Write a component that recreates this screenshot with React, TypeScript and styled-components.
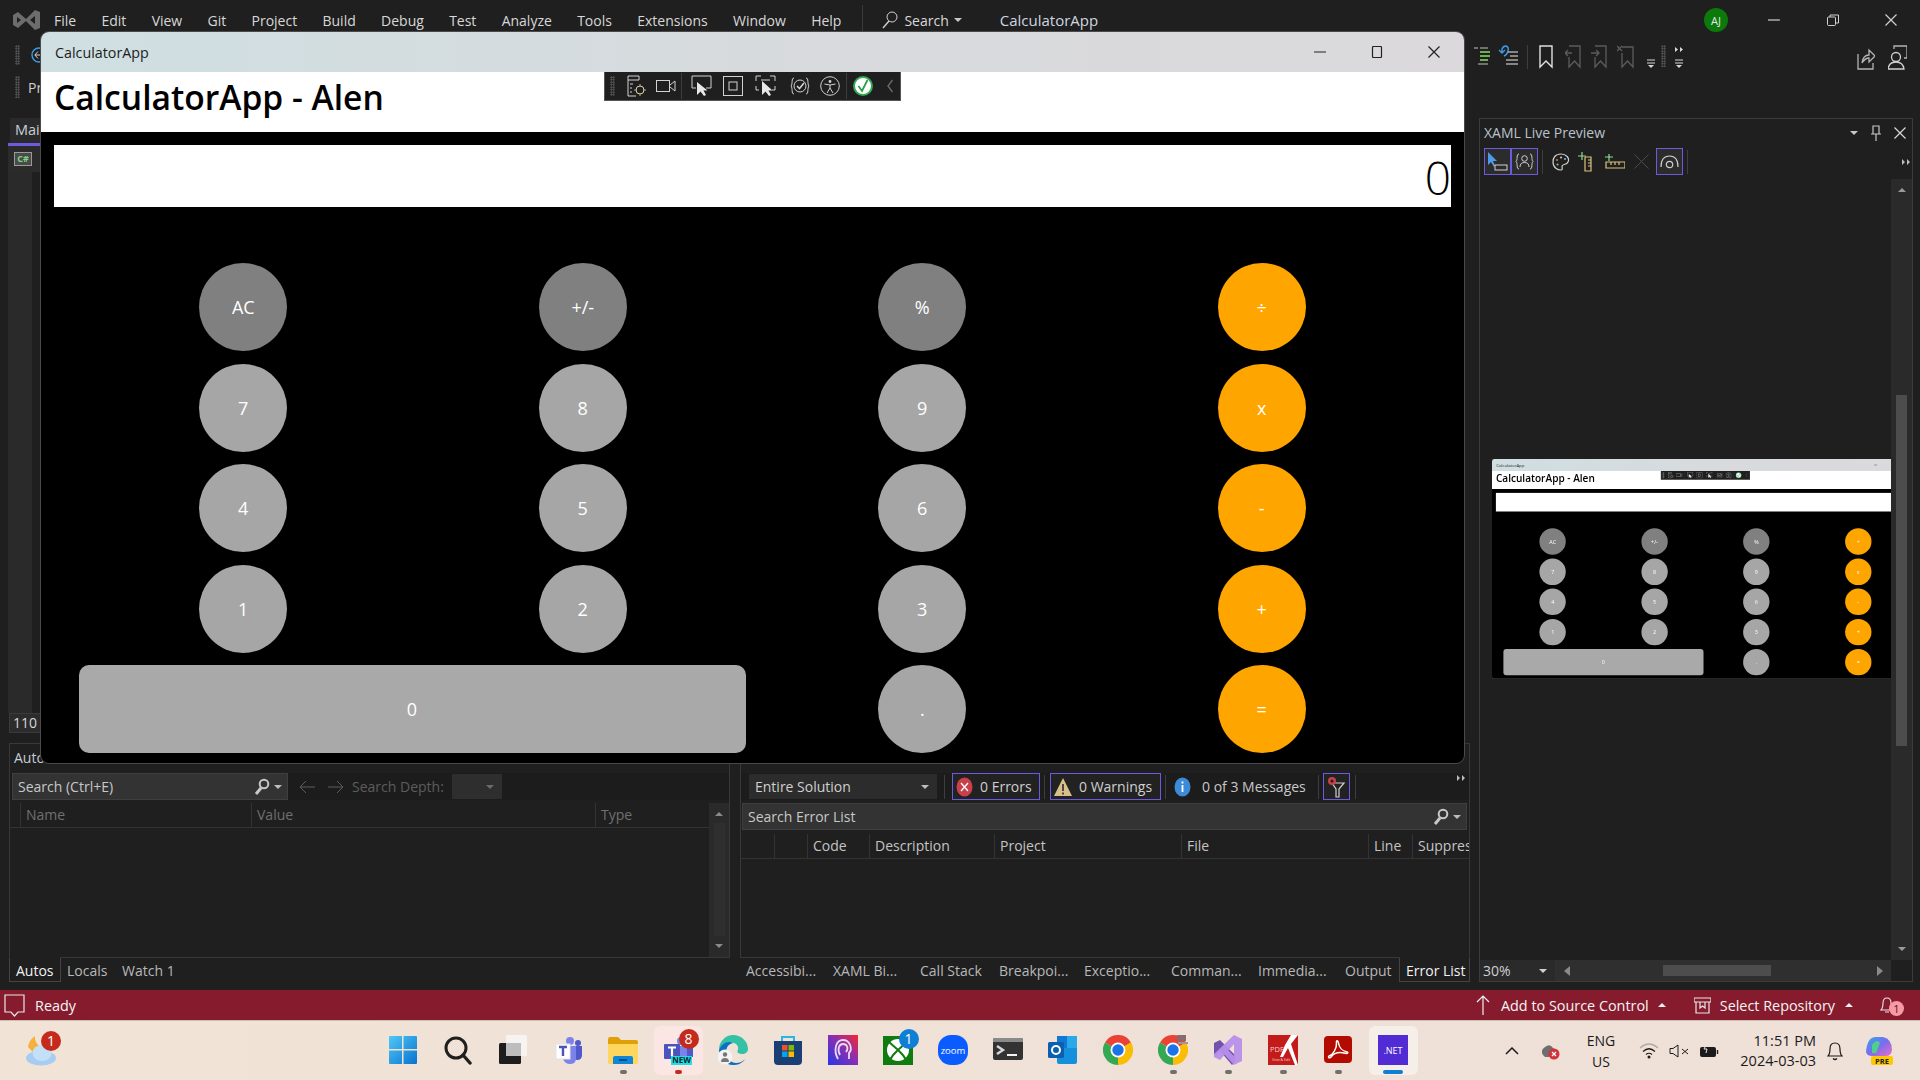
import * as React from "react";
import styled, { createGlobalStyle } from "styled-components";

const GlobalStyle = createGlobalStyle`
  html, body { margin: 0; padding: 0; background: #1f1f1f; }
  * { box-sizing: border-box; }
  body { font-family: "Open Sans", "Noto Sans", "Liberation Sans", sans-serif; }
`;

const LINE = "#d2d2d2";
const DIM = "#5c5c5c";
const PURPLE = "#6a5ce0";

const SLayout = styled.div`
  position: relative;
  width: 1920px;
  height: 1080px;
  overflow: hidden;
  background: #1f1f1f;
  display: flex;
  flex-direction: column;
  color: #d4d4d4;
`;

const SSvg = styled.svg<{ $ml?: number }>`
  display: block;
  flex: none;
  margin-left: ${p => p.$ml ?? 0}px;
`;

function Icon(props: { w: number; h?: number; ml?: number; children: React.ReactNode }) {
  const h = props.h ?? props.w;
  return (
    <SSvg width={props.w} height={h} viewBox={`0 0 ${props.w} ${h}`} fill="none" $ml={props.ml}>
      {props.children}
    </SSvg>
  );
}

/* ---------- menu bar ---------- */

const SMenuBar = styled.div`
  height: 40px;
  flex: none;
  display: flex;
  align-items: center;
  padding-left: 13px;
  font-size: 14px;
  color: #d8d8d8;
`;

const SMenuItems = styled.div`
  display: flex;
  gap: 25.3px;
  margin-left: 14px;
`;

const SMenuSep = styled.div`
  width: 1px;
  height: 30px;
  background: #3a3a3a;
  margin-left: 21px;
`;

const SSearchLabel = styled.span`
  margin-left: 6px;
`;

const SProjectName = styled.span`
  margin-left: 38px;
  font-size: 15px;
  color: #cfd6e0;
`;

const SAvatar = styled.div`
  width: 24px;
  height: 24px;
  border-radius: 50%;
  background: #0b7a0b;
  color: #e8e8e8;
  font-size: 11px;
  display: flex;
  align-items: center;
  justify-content: center;
  margin-left: auto;
`;

const SFrameControls = styled.div`
  display: flex;
  align-items: center;
  margin-left: 40px;
  margin-right: 23px;
  gap: 46.5px;
`;

/* ---------- toolbars ---------- */

const SToolRow = styled.div`
  height: 70px;
  flex: none;
  display: flex;
`;

const SLeftTools = styled.div`
  width: 1474px;
  flex: none;
  padding: 5px 0 0 15px;
  display: flex;
  flex-direction: column;
  gap: 12px;
`;

const SLeftTool = styled.div<{ $gap: number }>`
  display: flex;
  align-items: center;
  gap: ${p => p.$gap}px;
  height: 20px;
  font-size: 14px;
  color: #cfcfcf;
`;

const SGrip = styled.div<{ $h?: number; $ml?: number }>`
  width: 5px;
  height: ${p => p.$h ?? 20}px;
  flex: none;
  margin-left: ${p => p.$ml ?? 0}px;
  background-image: radial-gradient(#5a5a5a 0.8px, transparent 1px);
  background-size: 2.5px 2.5px;
`;

const SRightTools = styled.div`
  flex: 1;
  display: flex;
  align-items: flex-start;
  padding-top: 5px;
`;

const SToolSep = styled.div<{ $ml?: number; $h?: number }>`
  width: 1px;
  height: ${p => p.$h ?? 24}px;
  background: #3e3e3e;
  flex: none;
  margin-left: ${p => p.$ml ?? 0}px;
`;

/* ---------- main ---------- */

const SMain = styled.div`
  height: 872px;
  flex: none;
  display: flex;
`;

const SLeftPane = styled.div`
  width: 1475px;
  flex: none;
  display: flex;
  flex-direction: column;
`;

const SEditor = styled.div`
  height: 633px;
  flex: none;
  padding: 8px 10px 10px 8px;
  display: flex;
  flex-direction: column;
`;

const STabStrip = styled.div`
  height: 28px;
  flex: none;
  border-bottom: 3px solid ${PURPLE};
  padding-left: 2px;
`;

const SDocTab = styled.div`
  width: 31px;
  height: 25px;
  background: #2a2a2a;
  font-size: 14.5px;
  line-height: 24px;
  padding-left: 5px;
  color: #c8d0d8;
  overflow: hidden;
`;

const SFileRow = styled.div`
  height: 26px;
  flex: none;
  background: #2b2b2b;
  padding: 6px 0 0 6px;
`;

const SCsBadge = styled.div`
  width: 18px;
  height: 14px;
  border: 1px solid #9a9a9a;
  background: #4a4a4a;
  color: #7fd67f;
  font-size: 9px;
  font-weight: 700;
  line-height: 12px;
  text-align: center;
`;

const SMargin = styled.div`
  flex: 1;
  width: 24px;
  background: #2a2a2a;
`;

const SZoomBox = styled.div`
  height: 20px;
  width: 33px;
  flex: none;
  margin-left: 1px;
  background: #2c2c2c;
  border: 1px solid #3a3a3a;
  font-size: 14px;
  line-height: 18px;
  padding-left: 3px;
  color: #d8d8d8;
`;

const SBottom = styled.div`
  height: 239px;
  flex: none;
  padding-left: 9px;
  display: flex;
  gap: 10px;
`;

const SPanelColumn = styled.div<{ $w: number }>`
  width: ${p => p.$w}px;
  flex: none;
  display: flex;
  flex-direction: column;
`;

const SPanelFrame = styled.div`
  height: 215px;
  flex: none;
  border: 1px solid #383838;
  display: flex;
  flex-direction: column;
`;

const SPanelTitle = styled.div`
  height: 29px;
  flex: none;
  font-size: 14px;
  line-height: 28px;
  padding-left: 4px;
  color: #c4ccd4;
`;

const SPanelTools = styled.div`
  height: 27px;
  flex: none;
  display: flex;
  align-items: center;
  padding: 0 0 0 2px;
  background: #1c1c1c;
  font-size: 14px;
`;

const SSearchBox = styled.div<{ $w?: number }>`
  ${p => (p.$w ? `width: ${p.$w}px;` : "flex: 1;")}
  height: 27px;
  flex-shrink: 0;
  background: #333333;
  border: 1px solid #3f3f3f;
  display: flex;
  align-items: center;
  justify-content: space-between;
  padding: 0 5px;
  font-size: 14px;
  color: #c8c8c8;
`;

const SSearchEnd = styled.div`
  display: flex;
  align-items: center;
  gap: 5px;
`;

const SCaret = styled.div<{ $c?: string; $up?: boolean; $ml?: number }>`
  width: 0;
  height: 0;
  flex: none;
  margin-left: ${p => p.$ml ?? 0}px;
  border-left: 4px solid transparent;
  border-right: 4px solid transparent;
  ${p => (p.$up ? "border-bottom" : "border-top")}: 4px solid ${p => p.$c ?? "#bdbdbd"};
`;

const SDimLabel = styled.span`
  color: ${DIM};
  margin-left: 8px;
`;

const SCombo = styled.div<{ $w: number; $ml: number; $bg?: string; $pl?: number; $h?: number }>`
  width: ${p => p.$w}px;
  height: ${p => p.$h ?? 25}px;
  flex: none;
  margin-left: ${p => p.$ml}px;
  background: ${p => p.$bg ?? "#2e2e2e"};
  display: flex;
  align-items: center;
  justify-content: space-between;
  padding: 0 8px 0 ${p => p.$pl ?? 6}px;
  color: #cfcfcf;
  font-size: 14px;
`;

const STableArea = styled.div`
  flex: 1;
  display: flex;
  min-height: 0;
  margin-top: 3px;
`;

const STable = styled.div`
  flex: 1;
  min-width: 0;
  overflow: hidden;
`;

const SHead = styled.div`
  height: 25px;
  display: flex;
  border-bottom: 1px solid #333333;
`;

const SHeadCell = styled.div<{ $w: number; $c?: string }>`
  width: ${p => p.$w}px;
  flex: none;
  border-left: 1px solid #333333;
  padding-left: 5px;
  font-size: 14px;
  line-height: 24px;
  color: ${p => p.$c ?? "#c4c4c4"};
  white-space: nowrap;
  &:first-child { border-left: 0; }
`;

const SScrollCol = styled.div<{ $w: number }>`
  width: ${p => p.$w}px;
  flex: none;
  background: #2a2a2a;
  display: flex;
  flex-direction: column;
  align-items: center;
  justify-content: space-between;
  padding: 9px 0;
  position: relative;
`;

const SThumb = styled.div<{ $top: number; $h: number; $w: number; $c: string }>`
  position: absolute;
  top: ${p => p.$top}px;
  left: 50%;
  margin-left: -${p => p.$w / 2}px;
  width: ${p => p.$w}px;
  height: ${p => p.$h}px;
  background: ${p => p.$c};
`;

const SToolStrip = styled.div`
  height: 27px;
  flex: none;
  display: flex;
  align-items: center;
  padding-left: 8px;
  font-size: 14px;
  background: #1c1c1c;
`;

const SFilterBtn = styled.div<{ $w: number; $ml: number; $gap?: number }>`
  width: ${p => p.$w}px;
  height: 27px;
  flex: none;
  margin-left: ${p => p.$ml}px;
  border: 1px solid ${PURPLE};
  display: flex;
  align-items: center;
  padding-left: ${p => (p.$gap === undefined ? 3 : 2)}px;
  gap: ${p => p.$gap ?? 7}px;
  color: #cfcfcf;
  background: #222222;
  white-space: nowrap;
`;

const SMsgLabel = styled.span`
  margin-left: 11px;
  color: #c8c8c8;
  white-space: nowrap;
`;

const SStripOverflow = styled.div`
  align-self: flex-start;
  margin: 1px 0 0 101px;
`;

const SErrorSearch = styled.div`
  margin: 3px 2px 4px 1px;
  flex: none;
  display: flex;
`;

const SBottomTabs = styled.div`
  height: 24px;
  flex: none;
  display: flex;
  font-size: 14px;
  color: #b8b8b8;
`;

const SBottomTab = styled.div<{ $active?: boolean; $ml?: number; $w: number }>`
  width: ${p => p.$w}px;
  flex: none;
  margin-left: ${p => p.$ml ?? 0}px;
  white-space: nowrap;
  line-height: 25px;
  padding-left: 6px;
  ${p =>
    p.$active
      ? `color: #f2f2f2; border: 1px solid #444; border-top: 1px solid #1f1f1f; margin-top: -1px; height: 25px;`
      : ""}
`;

/* ---------- xaml live preview ---------- */

const SXaml = styled.div`
  margin: 8px 0 0 4px;
  width: 434px;
  height: 864px;
  flex: none;
  border: 1px solid #3c3c3c;
  display: flex;
  flex-direction: column;
`;

const SXamlTitle = styled.div`
  height: 29px;
  flex: none;
  display: flex;
  align-items: center;
  padding: 0 6px 2px 4px;
  font-size: 14px;
  color: #b9c3cc;
`;

const SXamlTitleIcons = styled.div`
  margin-left: auto;
  display: flex;
  align-items: center;
`;

const SXamlTools = styled.div`
  height: 27px;
  flex: none;
  display: flex;
  align-items: center;
  padding-left: 4px;
`;

const SToggle = styled.div<{ $ml?: number }>`
  width: 27px;
  height: 27px;
  flex: none;
  margin-left: ${p => p.$ml ?? 0}px;
  border: 1px solid ${PURPLE};
  background: #2c2c2c;
  display: flex;
  align-items: center;
  justify-content: center;
`;

const SXamlBody = styled.div`
  flex: 1;
  min-height: 0;
  margin-top: 4px;
  display: flex;
`;

const SCanvas = styled.div`
  flex: 1;
  padding: 280px 0 0 12px;
  min-width: 0;
  overflow: hidden;
`;

const SPreviewClip = styled.div`
  width: 400px;
  height: 220px;
  overflow: hidden;
`;

const SPreviewScale = styled.div`
  transform: scale(0.3);
  transform-origin: 0 0;
  width: 1423px;
`;

const SXamlFoot = styled.div`
  height: 21px;
  flex: none;
  display: flex;
  background: #2f2f2f;
`;

const SHScroll = styled.div`
  flex: 1;
  display: flex;
  align-items: center;
  justify-content: space-between;
  padding: 0 8px 0 9px;
  position: relative;
`;

const SHThumb = styled.div`
  position: absolute;
  left: 108px;
  top: 5px;
  width: 108px;
  height: 11px;
  background: #4d4d4d;
`;

const SFootCorner = styled.div`
  width: 21px;
  flex: none;
  background: #1f1f1f;
`;

/* ---------- status bar ---------- */

const SStatusBar = styled.div`
  margin-top: 8px;
  height: 30px;
  flex: none;
  background: #861b2e;
  color: #f4f4f4;
  font-size: 14.4px;
  display: flex;
  align-items: center;
  padding-left: 4px;
`;

const SStatusText = styled.span<{ $ml?: number }>`
  margin-left: ${p => p.$ml ?? 0}px;
  white-space: nowrap;
`;

const SStatusRight = styled.div`
  margin-left: auto;
  display: flex;
  align-items: center;
  padding-right: 26px;
`;

const SBellWrap = styled.div`
  position: relative;
  margin-left: 27px;
`;

const SBellBadge = styled.span`
  position: absolute;
  left: 9px;
  top: 5px;
  width: 15px;
  height: 15px;
  border-radius: 50%;
  background: #f79aa5;
  color: #5a1020;
  font-size: 11px;
  line-height: 15px;
  text-align: center;
`;

/* ---------- taskbar ---------- */

const STaskbar = styled.div`
  height: 60px;
  flex: none;
  background: linear-gradient(90deg, #f1e3d5, #efe1d7 60%, #efe0d8);
  border-top: 1px solid #cbbfb4;
  display: flex;
  align-items: center;
  position: relative;
  color: #1b1b1b;
`;

const SWeather = styled.div`
  position: relative;
  margin-left: 24px;
  width: 34px;
  height: 36px;
`;

const STaskIcons = styled.div`
  position: absolute;
  left: 375.5px;
  top: 0;
  display: flex;
`;

const STaskItem = styled.div<{ $bg?: string }>`
  position: relative;
  width: 55px;
  height: 58px;
  display: flex;
  align-items: center;
  justify-content: center;
  &::before {
    content: "";
    position: absolute;
    left: 3px;
    right: 3px;
    top: 5px;
    bottom: 4px;
    border-radius: 6px;
    background: ${p => p.$bg ?? "transparent"};
  }
  & > svg { position: relative; }
`;

const STaskDot = styled.span<{ $c: string; $w: number }>`
  position: absolute;
  left: 50%;
  bottom: 5px;
  width: ${p => p.$w}px;
  height: 4px;
  margin-left: -${p => p.$w / 2}px;
  border-radius: 2px;
  background: ${p => p.$c};
`;

const SBadge = styled.span<{ $c: string; $x?: number; $y?: number }>`
  position: absolute;
  left: ${p => p.$x ?? 28}px;
  top: ${p => p.$y ?? 8}px;
  width: 20px;
  height: 20px;
  border-radius: 50%;
  background: ${p => p.$c};
  color: #fff;
  font-size: 14px;
  line-height: 20px;
  text-align: center;
`;

const STray = styled.div`
  position: absolute;
  left: 1505px;
  top: 0;
  height: 59px;
  display: flex;
  align-items: center;
  font-size: 14px;
`;

const SLang = styled.div`
  margin-left: 21px;
  width: 40px;
  text-align: center;
  line-height: 21px;
`;

const SClock = styled.div`
  margin-left: 12px;
  width: 85px;
  font-size: 14.5px;
  text-align: right;
  line-height: 20px;
  white-space: nowrap;
`;

/* ---------- the calculator window ---------- */

const SFloating = styled.div`
  position: absolute;
  left: 41px;
  top: 32px;
  z-index: 5;
`;

const SWindow = styled.div`
  position: relative;
  width: 1423px;
  height: 731px;
  background: #000;
  border-radius: 8px;
  overflow: hidden;
  box-shadow: 0 0 0 1px #4a4a4a;
`;

const STitleBar = styled.div`
  height: 40px;
  background: linear-gradient(90deg, #cfdfe2, #d8dadd 55%, #dbd9db);
  display: flex;
  align-items: center;
  padding-left: 14px;
  font-size: 14.3px;
  color: #1c1c1c;
`;

const SWinControls = styled.div`
  margin-left: auto;
  margin-right: 24px;
  display: flex;
  align-items: center;
  gap: 45px;
`;

const SAppHeader = styled.div`
  height: 60px;
  background: #fff;
  padding-left: 13px;
  font-size: 33.6px;
  font-weight: 600;
  line-height: 50px;
  color: #000;
`;

const SDisplay = styled.div`
  margin: 13px 13px 0;
  height: 62px;
  background: #fff;
  color: #000;
  font-size: 46px;
  font-weight: 300;
  line-height: 64px;
  text-align: right;
`;

const SKeys = styled.div`
  margin: 56px 0 0 32.5px;
  display: grid;
  grid-template-columns: repeat(4, 339.5px);
  grid-auto-rows: 88px;
  row-gap: 12.5px;
  justify-items: center;
`;

const KEY_COLORS = { fn: "#808080", num: "#a6a6a6", op: "#ffa500" };

const SKey = styled.div<{ $kind: "fn" | "num" | "op"; $wide?: boolean }>`
  width: ${p => (p.$wide ? "667px" : "88px")};
  height: 88px;
  border-radius: ${p => (p.$wide ? "10px" : "50%")};
  background: ${p => (p.$wide ? "#a9a9a9" : KEY_COLORS[p.$kind])};
  ${p => (p.$wide ? "grid-column: span 2; margin-right: 2px;" : "")}
  color: #fff;
  font-size: 18px;
  display: flex;
  align-items: center;
  justify-content: center;
`;

const SLiveBar = styled.div`
  position: absolute;
  left: 563px;
  top: 40px;
  width: 297px;
  height: 29px;
  background: #1f1f1f;
  border: 1px solid #555;
  border-top: 0;
  display: flex;
  align-items: center;
  padding-left: 5px;
`;

const KEYS: { label: string; kind: "fn" | "num" | "op"; wide?: boolean }[] = [
  { label: "AC", kind: "fn" },
  { label: "+/-", kind: "fn" },
  { label: "%", kind: "fn" },
  { label: "÷", kind: "op" },
  { label: "7", kind: "num" },
  { label: "8", kind: "num" },
  { label: "9", kind: "num" },
  { label: "x", kind: "op" },
  { label: "4", kind: "num" },
  { label: "5", kind: "num" },
  { label: "6", kind: "num" },
  { label: "-", kind: "op" },
  { label: "1", kind: "num" },
  { label: "2", kind: "num" },
  { label: "3", kind: "num" },
  { label: "+", kind: "op" },
  { label: "0", kind: "num", wide: true },
  { label: ".", kind: "num" },
  { label: "=", kind: "op" },
];

const Minimize = ({ c = "#222" }: { c?: string }) => (
  <Icon w={12}><path d="M0 6H12" stroke={c} strokeWidth="1.2" /></Icon>
);
const CloseX = ({ c = "#222", ml }: { c?: string; ml?: number }) => (
  <Icon w={12} ml={ml}><path d="M0.5 0.5L11.5 11.5M11.5 0.5L0.5 11.5" stroke={c} strokeWidth="1.2" /></Icon>
);

function LiveBar() {
  return (
    <SLiveBar>
      <SGrip />
      <Icon w={20} h={22} ml={12}>
        <path d="M1 1H12V5H1ZM1 5V21H9M3 9H6M3 13H5M3 17H5" stroke={LINE} />
        <circle cx="13" cy="15" r="4" stroke={LINE} />
        <path d="M13 9V12M13 18V21M7 15H10M16 15H19" stroke="#d8a24a" />
      </Icon>
      <Icon w={20} h={14} ml={9}>
        <rect x="0.5" y="1.5" width="13" height="11" stroke={LINE} />
        <path d="M14 6L19 2V12L14 8" stroke={LINE} />
      </Icon>
      <SToolSep $ml={5} $h={26} />
      <Icon w={21} h={22} ml={9}>
        <path d="M5 13H1V1H20V13H15" stroke={LINE} />
        <path d="M6 7V20L9.5 16.5L13 21L15 20L12.5 15.5H16.5Z" fill="#e8e8e8" />
      </Icon>
      <Icon w={20} ml={11}>
        <rect x="0.5" y="0.5" width="19" height="19" stroke={LINE} />
        <rect x="6" y="6" width="8" height="8" stroke={LINE} />
      </Icon>
      <Icon w={21} h={22} ml={12}>
        <path d="M1 6V1H6M15 1H20V6M1 11V15H4M20 11V15H17M6 5H15" stroke={LINE} />
        <path d="M7 6V20L10.5 16.5L14 21L16 20L13.5 15.5H17.5Z" fill="#e8e8e8" />
      </Icon>
      <Icon w={20} ml={14}>
        <path d="M4 2C1 2 3 8 1 10C3 12 1 18 4 18M16 2C19 2 17 8 19 10C17 12 19 18 16 18" stroke={LINE} />
        <circle cx="10" cy="10" r="6" stroke={LINE} />
        <path d="M7 10L9.5 12.5L14 7" stroke={LINE} strokeWidth="1.6" />
      </Icon>
      <Icon w={20} ml={10}>
        <circle cx="10" cy="10" r="9.3" stroke={LINE} />
        <circle cx="10" cy="5.5" r="1.4" fill={LINE} />
        <path d="M4.5 8L10 9L15.5 8M10 9V12L7 17M10 12L13 17" stroke={LINE} />
      </Icon>
      <SToolSep $ml={6} $h={26} />
      <Icon w={20} ml={6}>
        <circle cx="10" cy="10" r="9" fill="#fff" stroke="#34a853" strokeWidth="2" />
        <path d="M5.5 10L9 15L14.5 4" stroke="#2e9e46" strokeWidth="1.8" />
      </Icon>
      <Icon w={6} h={14} ml={14}><path d="M5.5 1L1 7L5.5 13" stroke="#6a6a6a" strokeWidth="1.4" /></Icon>
    </SLiveBar>
  );
}

function CalcWindow({ value }: { value: string }) {
  return (
    <SWindow>
      <STitleBar>
        CalculatorApp
        <SWinControls>
          <Minimize />
          <Icon w={12}><rect x="1.5" y="0.5" width="9" height="11" rx="1" stroke="#222" strokeWidth="1.2" /></Icon>
          <CloseX />
        </SWinControls>
      </STitleBar>
      <SAppHeader>CalculatorApp - Alen</SAppHeader>
      <SDisplay>{value}</SDisplay>
      <SKeys>
        {KEYS.map(k => (
          <SKey key={k.label} $kind={k.kind} $wide={k.wide}>
            {k.label}
          </SKey>
        ))}
      </SKeys>
      <LiveBar />
    </SWindow>
  );
}

const Magnifier = () => (
  <Icon w={16} h={18}>
    <circle cx="10" cy="6" r="4.3" stroke="#c8c8c8" strokeWidth="2" />
    <path d="M7 10L2 16" stroke="#c8c8c8" strokeWidth="3" />
  </Icon>
);

const MENU = ["File", "Edit", "View", "Git", "Project", "Build", "Debug", "Test", "Analyze", "Tools", "Extensions", "Window", "Help"];

const AUTOS_COLS: [string, number][] = [["", 10], ["Name", 231], ["Value", 344], ["Type", 115]];
const ERROR_COLS: [string, number][] = [["", 33], ["", 33], ["Code", 62], ["Description", 125], ["Project", 187], ["File", 187], ["Line", 44], ["Suppres", 52]];

const ERROR_TABS: [string, number, number][] = [
  ["Accessibi...", 80, 0],
  ["XAML Bi...", 80, 7],
  ["Call Stack", 72, 7],
  ["Breakpoi...", 78, 7],
  ["Exceptio...", 80, 7],
  ["Comman...", 80, 7],
  ["Immedia...", 86, 7],
  ["Output", 60, 1],
];

/* taskbar logos, all on a 30x30 grid */
const TaskLogos: Record<string, React.ReactNode> = {
  start: (
    <>
      <defs>
        <linearGradient id="st" x1="0" y1="0" x2="1" y2="1">
          <stop offset="0" stopColor="#4fc8f7" />
          <stop offset="1" stopColor="#0a72cf" />
        </linearGradient>
      </defs>
      <path d="M1 1.5Q1 1 1.5 1H14V14H1ZM15.5 1H28Q29 1 29 2V14H15.5ZM1 15.5H14V29H2Q1 29 1 28ZM15.5 15.5H29V28Q29 29 28 29H15.5Z" fill="url(#st)" />
    </>
  ),
  search: (
    <>
      <circle cx="13" cy="13" r="10" stroke="#1f1f1f" strokeWidth="3" />
      <path d="M20 20L27 28" stroke="#1f1f1f" strokeWidth="3.4" strokeLinecap="round" />
    </>
  ),
  view: (
    <>
      <rect x="1" y="8" width="22" height="21" rx="1.5" fill="#1d1d1d" />
      <rect x="8" y="0" width="21" height="21" rx="1.5" fill="#f6f3f0" />
      <rect x="8" y="8" width="15" height="13" fill="#bdbdbd" />
    </>
  ),
  teams: (
    <>
      <circle cx="17" cy="6" r="4" fill="#7b83eb" />
      <circle cx="25" cy="8" r="3" fill="#5059c9" />
      <path d="M21 11H29V20Q29 25 24 25Q21 25 20 23Z" fill="#5059c9" />
      <path d="M11 11H23V23Q23 29 17 29Q12 29 10 24Z" fill="#7b83eb" />
      <rect x="3" y="9" width="14" height="15" fill="#fff" stroke="#e4e4e4" />
      <path d="M6 12H14M10 12V21" stroke="#4b53bc" strokeWidth="2.4" />
    </>
  ),
  files: (
    <>
      <path d="M0 5Q0 2 2 2H10L13 5H28Q30 5 30 7V28H0Z" fill="#e0a008" />
      <path d="M0 9H30V28Q30 29 29 29H1Q0 29 0 28Z" fill="#ffd75e" />
      <path d="M5 29V23Q5 21 7 21H23Q25 21 25 23V29Z" fill="#0f86d6" />
      <path d="M11 25H19" stroke="#063f6b" strokeWidth="1.6" />
    </>
  ),
  teamsNew: (
    <>
      <circle cx="18" cy="6" r="4" fill="#7b83eb" />
      <circle cx="26" cy="8" r="3" fill="#5059c9" />
      <path d="M12 11H24V24H12Z" fill="#7b83eb" />
      <path d="M24 12H30V22H24Z" fill="#5059c9" />
      <rect x="1" y="9" width="16" height="15" rx="1" fill="#4b53bc" />
      <path d="M5 12.5H13M9 12.5V21" stroke="#fff" strokeWidth="2.2" />
      <rect x="8" y="21" width="21" height="9" fill="#1fe0e0" />
      <text x="18.5" y="28.4" textAnchor="middle" fontSize="8" fontWeight="700" fill="#123" fontFamily="Open Sans, sans-serif">NEW</text>
    </>
  ),
  edge: (
    <>
      <path d="M1 15C1 6 8 0 15 0C24 0 30 7 30 14C30 19 24 20 20 18C18 16 22 14 19 10C14 5 4 8 1 15Z" fill="#35c1a6" />
      <path d="M1 15C3 9 10 5 15 8C9 9 6 16 10 23C13 29 22 30 27 24C24 29 19 30 15 30C7 30 1 23 1 15Z" fill="#0c6fc0" />
      <circle cx="7" cy="22" r="7.5" fill="#f3f3f3" />
      <circle cx="7" cy="19.5" r="2.2" fill="#777" />
      <path d="M3 27Q3 23 7 23Q11 23 11 27Z" fill="#777" />
    </>
  ),
  store: (
    <>
      <path d="M9 6V2H21V6" stroke="#28b5e8" strokeWidth="2" />
      <path d="M1 6H29V26Q29 30 25 30H5Q1 30 1 26Z" fill="#1a3f75" />
      <rect x="9" y="10" width="5.5" height="5.5" fill="#f25022" />
      <rect x="15.5" y="10" width="5.5" height="5.5" fill="#7fba00" />
      <rect x="9" y="16.5" width="5.5" height="5.5" fill="#00a4ef" />
      <rect x="15.5" y="16.5" width="5.5" height="5.5" fill="#ffb900" />
    </>
  ),
  copilot: (
    <>
      <defs>
        <linearGradient id="ap" x1="0" y1="1" x2="1" y2="0">
          <stop offset="0" stopColor="#2337e8" />
          <stop offset="0.55" stopColor="#8b2fb0" />
          <stop offset="1" stopColor="#f7262e" />
        </linearGradient>
      </defs>
      <rect width="30" height="30" fill="url(#ap)" />
      <path d="M10 24C5 15 8 5 15 5C22 5 25 14 21 18V24M12 20C9 14 11 9 15 9C19 9 21 13 18 17" stroke="#e6dcf6" strokeWidth="1.8" />
    </>
  ),
  xbox: (
    <>
      <rect y="1" width="30" height="29" fill="#107c10" />
      <circle cx="15" cy="15" r="11" fill="#fff" />
      <path d="M6 7L15 15L24 7M7 25C9 20 13 17 15 15C17 17 21 20 23 25" stroke="#107c10" strokeWidth="2" />
    </>
  ),
  zoom: (
    <>
      <rect width="30" height="30" rx="13" fill="#0b5cff" />
      <text x="15" y="18.5" textAnchor="middle" fontSize="9.5" fill="#fff" fontFamily="Open Sans, sans-serif">zoom</text>
    </>
  ),
  terminal: (
    <>
      <rect y="3" width="30" height="22" rx="2" fill="#333" />
      <path d="M0 5Q0 3 2 3H28Q30 3 30 5V7H0Z" fill="#8a8a8a" />
      <path d="M4 11L10 15L4 19" stroke="#d8d8d8" strokeWidth="2.4" />
      <path d="M14 20H24" stroke="#f2f2f2" strokeWidth="2" />
    </>
  ),
  outlook: (
    <>
      <rect x="9" y="1" width="20" height="12" fill="#0f78d4" />
      <rect x="19" y="1" width="10" height="12" fill="#29a8ea" />
      <path d="M9 13H29V27Q29 29 27 29H11Q9 29 9 27Z" fill="#1490df" />
      <rect y="7" width="16" height="16" rx="1.5" fill="#0a5fb0" />
      <circle cx="8" cy="15" r="4" stroke="#fff" strokeWidth="2" />
    </>
  ),
  chrome: (
    <>
      <path d="M15 15L2 7.5A15 15 0 0 1 28 7.5Z" fill="#ea4335" />
      <path d="M15 15L28 7.5A15 15 0 0 1 15 30Z" fill="#fbbc04" />
      <path d="M15 15L15 30A15 15 0 0 1 2 7.5Z" fill="#34a853" />
      <circle cx="15" cy="15" r="7.5" fill="#fff" />
      <circle cx="15" cy="15" r="5.7" fill="#1a73e8" />
    </>
  ),
  chromeProfile: (
    <>
      <path d="M15 15L2 7.5A15 15 0 0 1 28 7.5Z" fill="#ea4335" />
      <path d="M15 15L28 7.5A15 15 0 0 1 15 30Z" fill="#fbbc04" />
      <path d="M15 15L15 30A15 15 0 0 1 2 7.5Z" fill="#34a853" />
      <circle cx="15" cy="15" r="7.5" fill="#fff" />
      <circle cx="15" cy="15" r="5.7" fill="#1a73e8" />
      <rect x="19" y="-4" width="9" height="10" fill="#8a6a70" />
      <path d="M20 8H31" stroke="#999" strokeWidth="2" />
    </>
  ),
  vs: (
    <>
      <path d="M1 8L7 5L22 20V27L19 30L7 16L3 20L1 19Z" fill="#7252aa" />
      <path d="M21 0L29 4V26L21 30L11 19L15 15L21 21V9L7 25L1 22V19L21 0Z" fill="#b78eea" opacity="0.95" />
    </>
  ),
  pdf: (
    <>
      <rect width="30" height="30" fill="#c31a1a" />
      <path d="M30 0H23L17 10L12 22H15L20 13L27 30H30L23 9Z" fill="#fff" />
      <text x="2" y="17" fontSize="7.5" fill="#f4d0d0" fontFamily="Open Sans, sans-serif">PDF</text>
      <text x="4" y="26" fontSize="3.5" fill="#f4d0d0" fontFamily="Open Sans, sans-serif">View &amp; Edit</text>
    </>
  ),
  acrobat: (
    <>
      <rect width="28" height="27" x="1" y="1" rx="4" fill="#b30b00" />
      <path d="M6 21C10 20 14 13 13.5 8C13 5 15 5 15.5 8C16 12 19 16 24 17C26 18 24 19 21 18C16 17 11 18 8 22C6 24 5 22 6 21Z" stroke="#fff" strokeWidth="1.5" />
    </>
  ),
  net: (
    <>
      <rect width="30" height="30" fill="#512bd4" />
      <text x="15" y="18.5" textAnchor="middle" fontSize="9" fill="#fff" fontFamily="Open Sans, sans-serif">.NET</text>
    </>
  ),
};

const TASK_ITEMS: { id: string; bg?: string; dot?: [string, number]; badge?: [string, string] }[] = [
  { id: "start" },
  { id: "search" },
  { id: "view" },
  { id: "teams" },
  { id: "files", dot: ["#6f6f6f", 7] },
  { id: "teamsNew", bg: "#fbe6e4", dot: ["#c42b1c", 7], badge: ["8", "#c42b1c"] },
  { id: "edge" },
  { id: "store" },
  { id: "copilot" },
  { id: "xbox", badge: ["1", "#0f7fd6"] },
  { id: "zoom" },
  { id: "terminal" },
  { id: "outlook" },
  { id: "chrome" },
  { id: "chromeProfile", dot: ["#6f6f6f", 7] },
  { id: "vs", dot: ["#6f6f6f", 7] },
  { id: "pdf", dot: ["#6f6f6f", 7] },
  { id: "acrobat", dot: ["#6f6f6f", 7] },
  { id: "net", bg: "#f6eee8", dot: ["#0f7fd6", 20] },
];

export default function App() {
  return (
    <SLayout>
      <GlobalStyle />

      <SMenuBar>
        <Icon w={27} h={20}>
          <path d="M0 5L5 2L13 9L22 0L27 2V18L22 20L13 11L5 18L0 15ZM4 7V13L8 10ZM22 6L17 10L22 14Z" fill="#6d6d6d" fillRule="evenodd" />
        </Icon>
        <SMenuItems>
          {MENU.map(m => (
            <span key={m}>{m}</span>
          ))}
        </SMenuItems>
        <SMenuSep />
        <Icon w={16} h={18} ml={19}>
          <circle cx="10" cy="6" r="5" stroke="#d0d0d0" />
          <path d="M7 10L1 17" stroke="#d0d0d0" strokeWidth="1.4" />
        </Icon>
        <SSearchLabel>Search</SSearchLabel>
        <SCaret $c="#c8c8c8" $ml={5} />
        <SProjectName>CalculatorApp</SProjectName>
        <SAvatar>AJ</SAvatar>
        <SFrameControls>
          <Minimize c="#d0d0d0" />
          <Icon w={12}>
            <rect x="0.5" y="3" width="8" height="8.5" rx="1" stroke="#d0d0d0" />
            <path d="M3 3V1H11.5V9H9" stroke="#d0d0d0" />
          </Icon>
          <CloseX c="#d0d0d0" />
        </SFrameControls>
      </SMenuBar>

      <SToolRow>
        <SLeftTools>
          <SLeftTool $gap={11}>
            <SGrip />
            <Icon w={16}>
              <circle cx="8" cy="8" r="7" stroke="#3f9be8" strokeWidth="1.4" />
              <path d="M12 8H4M7 4.5L3.8 8L7 11.5" stroke="#d8d8d8" />
            </Icon>
          </SLeftTool>
          <SLeftTool $gap={8}>
            <SGrip $h={22} />
            Pr
          </SLeftTool>
        </SLeftTools>
        <SRightTools>
          <Icon w={16} h={20}>
            <path d="M0 3H4M6 3H14M6 7H16M6 11H16M6 15H14M4 19H14" stroke="#8c8c8c" strokeWidth="1.4" />
            <path d="M6 7H16M6 11H16M6 15H14" stroke="#6cc24a" strokeWidth="1.6" />
          </Icon>
          <Icon w={20} h={22} ml={8}>
            <path d="M1 5L4 8L7 5M4 8V4Q5 1 8 1Q11 2 10 6Q9 10 6 11" stroke="#3f9be8" strokeWidth="1.4" />
            <path d="M10 7H20M12 11H20M8 15H20M8 19H20" stroke="#a8a8a8" strokeWidth="1.4" />
          </Icon>
          <SToolSep $ml={9} />
          <Icon w={14} h={24} ml={11}><path d="M1 1H13V22L7 16L1 22Z" stroke="#e0e0e0" strokeWidth="1.4" /></Icon>
          <Icon w={16} h={24} ml={12}><path d="M4 1H15V22L9.5 16L4 22V12M0 8H7M3 5L0 8L3 11" stroke={DIM} strokeWidth="1.3" /></Icon>
          <Icon w={16} h={24} ml={10}><path d="M4 1H15V22L9.5 16L4 22V12M0 8H7M5 5L8 8L5 11" stroke={DIM} strokeWidth="1.3" /></Icon>
          <Icon w={17} h={24} ml={10}><path d="M5 2H16V22L10.5 16L5 22V8M0 1L5 6M5 1L0 6" stroke={DIM} strokeWidth="1.3" /></Icon>
          <Icon w={8} h={24} ml={13}>
            <path d="M0 15H8M0 18H8" stroke="#d8d8d8" />
            <path d="M1 20H7L4 23Z" fill="#d8d8d8" />
          </Icon>
          <SGrip $h={22} $ml={6} />
          <Icon w={8} h={24} ml={9}>
            <path d="M0 2L3 4.5L0 7ZM5 2L8 4.5L5 7Z" fill="#d8d8d8" />
            <path d="M0 15H8M0 18H8" stroke="#d8d8d8" />
            <path d="M1 20H7L4 23Z" fill="#d8d8d8" />
          </Icon>
          <Icon w={18} h={26} ml={174}>
            <path d="M1 9V24H16V18M5 18Q6 10 12 10V5L18 11L12 17V13Q8 13 5 18Z" stroke="#b4b4b4" strokeWidth="1.3" />
          </Icon>
          <Icon w={19} h={26} ml={13}>
            <path d="M6 4V1H19V13H16" stroke="#b4b4b4" strokeWidth="1.3" />
            <circle cx="8" cy="12" r="4.5" stroke="#d0d0d0" strokeWidth="1.3" />
            <path d="M0 24Q1 17 8 17Q15 17 16 24Z" stroke="#d0d0d0" strokeWidth="1.3" />
          </Icon>
        </SRightTools>
      </SToolRow>

      <SMain>
        <SLeftPane>
          <SEditor>
            <STabStrip>
              <SDocTab>Mai</SDocTab>
            </STabStrip>
            <SFileRow>
              <SCsBadge>C#</SCsBadge>
            </SFileRow>
            <SMargin />
            <SZoomBox>110</SZoomBox>
          </SEditor>

          <SBottom>
            <SPanelColumn $w={721}>
              <SPanelFrame>
                <SPanelTitle>Auto</SPanelTitle>
                <SPanelTools>
                  <SSearchBox $w={276}>
                    Search (Ctrl+E)
                    <SSearchEnd>
                      <Magnifier />
                      <SCaret $ml={-1} />
                    </SSearchEnd>
                  </SSearchBox>
                  <Icon w={16} h={14} ml={11}><path d="M16 7H1M7 1L1 7L7 13" stroke={DIM} /></Icon>
                  <Icon w={16} h={14} ml={13}><path d="M0 7H15M9 1L15 7L9 13" stroke={DIM} /></Icon>
                  <SDimLabel>Search Depth:</SDimLabel>
                  <SCombo $w={50} $ml={8}>
                    <span />
                    <SCaret $c="#6a6a6a" />
                  </SCombo>
                </SPanelTools>
                <STableArea>
                  <STable>
                    <SHead>
                      {AUTOS_COLS.map(([name, w], i) => (
                        <SHeadCell key={i} $w={w} $c="#6f6f6f">{name}</SHeadCell>
                      ))}
                    </SHead>
                  </STable>
                  <SScrollCol $w={20}>
                    <SCaret $up $c="#8a8a8a" />
                    <SThumb $top={20} $h={113} $w={11} $c="#2f2f2f" />
                    <SCaret $c="#8a8a8a" />
                  </SScrollCol>
                </STableArea>
              </SPanelFrame>
              <SBottomTabs>
                <SBottomTab $active $w={52}>Autos</SBottomTab>
                <SBottomTab $w={55}>Locals</SBottomTab>
                <SBottomTab $w={80}>Watch 1</SBottomTab>
              </SBottomTabs>
            </SPanelColumn>

            <SPanelColumn $w={730}>
              <SPanelFrame>
                <SPanelTitle />
                <SToolStrip>
                  <SCombo $w={188} $ml={0} $bg="#2c2c2c">
                    Entire Solution
                    <SCaret />
                  </SCombo>
                  <SToolSep $ml={7} />
                  <SFilterBtn $w={88} $ml={7}>
                    <Icon w={17} h={20}>
                      <ellipse cx="8.5" cy="10" rx="8" ry="9.5" fill="#c8404a" />
                      <path d="M5 6L12 14M12 6L5 14" stroke="#fff" strokeWidth="1.3" />
                    </Icon>
                    <span>0 Errors</span>
                  </SFilterBtn>
                  <SToolSep $ml={4} />
                  <SFilterBtn $w={111} $ml={5} $gap={6}>
                    <Icon w={20} h={20}>
                      <path d="M10 1L19 19H1Z" fill="#d9c08a" />
                      <path d="M10 7V14M10 15.5V17.5" stroke="#2a2a2a" strokeWidth="1.6" />
                    </Icon>
                    <span>0 Warnings</span>
                  </SFilterBtn>
                  <SToolSep $ml={4} />
                  <Icon w={17} h={20} ml={8}>
                    <ellipse cx="8.5" cy="10" rx="8" ry="9.5" fill="#3c8ad8" />
                    <path d="M8.5 8V15M8.5 4.5V6.5" stroke="#fff" strokeWidth="1.8" />
                  </Icon>
                  <SMsgLabel>0 of 3 Messages</SMsgLabel>
                  <SToolSep $ml={12} />
                  <SFilterBtn $w={27} $ml={4}>
                    <Icon w={20} h={22}>
                      <path d="M5 7H17L12 13V21H9V13Z" stroke="#d0d0d0" strokeWidth="1.2" />
                      <circle cx="5" cy="5" r="4" fill="#c8404a" />
                      <circle cx="5" cy="5" r="1.5" fill="#1f1f1f" />
                    </Icon>
                  </SFilterBtn>
                  <SToolSep $ml={5} />
                  <SStripOverflow>
                    <Icon w={8} h={8}><path d="M0 1L3 4L0 7ZM5 1L8 4L5 7Z" fill="#bdbdbd" /></Icon>
                  </SStripOverflow>
                </SToolStrip>
                <SErrorSearch>
                  <SSearchBox>
                    Search Error List
                    <SSearchEnd>
                      <Magnifier />
                      <SCaret $ml={-1} />
                    </SSearchEnd>
                  </SSearchBox>
                </SErrorSearch>
                <STable>
                  <SHead>
                    {ERROR_COLS.map(([name, w], i) => (
                      <SHeadCell key={i} $w={w}>{name}</SHeadCell>
                    ))}
                  </SHead>
                </STable>
              </SPanelFrame>
              <SBottomTabs>
                {ERROR_TABS.map(([name, w, ml]) => (
                  <SBottomTab key={name} $w={w} $ml={ml}>{name}</SBottomTab>
                ))}
                <SBottomTab $active $w={71}>Error List</SBottomTab>
              </SBottomTabs>
            </SPanelColumn>
          </SBottom>
        </SLeftPane>

        <SXaml>
          <SXamlTitle>
            XAML Live Preview
            <SXamlTitleIcons>
              <SCaret $c="#c8c8c8" />
              <Icon w={10} h={16} ml={13}><path d="M2 1H8V9H2ZM0 9H10M5 9V16" stroke="#c8c8c8" strokeWidth="1.2" /></Icon>
              <CloseX c="#d8d8d8" ml={13} />
            </SXamlTitleIcons>
          </SXamlTitle>
          <SXamlTools>
            <SToggle>
              <Icon w={21} h={19}>
                <path d="M1 0V13L4 10L7 15L8 14L6 9H10Z" fill="#4f9be8" />
                <rect x="8" y="13" width="12" height="5" stroke="#cfcfcf" />
              </Icon>
            </SToggle>
            <SToggle>
              <Icon w={19} h={17}>
                <path d="M4 1C1 1 3 7 1 8.5C3 10 1 16 4 16M15 1C18 1 16 7 18 8.5C16 10 18 16 15 16" stroke="#cfcfcf" />
                <circle cx="9.5" cy="5.5" r="2.8" stroke="#cfcfcf" />
                <path d="M5 14Q5 9.5 9.5 9.5Q14 9.5 14 14" stroke="#cfcfcf" />
              </Icon>
            </SToggle>
            <SToolSep $ml={4} $h={24} />
            <Icon w={18} ml={9}>
              <path d="M9 1C3 1 1 5 1 9C1 15 6 17 9 17C11 17 10 14 10 13C10 11 15 12 16 9C18 5 14 1 9 1Z" stroke="#cfcfcf" strokeWidth="1.2" />
              <circle cx="5" cy="7" r="1.1" fill="#e06666" />
              <circle cx="9" cy="4.5" r="1.1" fill="#e0c060" />
              <circle cx="13" cy="6" r="1.1" fill="#6aa8e0" />
              <circle cx="5.5" cy="11.5" r="1.1" fill="#7ac070" />
            </Icon>
            <Icon w={14} h={20} ml={8}>
              <path d="M0 4H8M4 0V8" stroke="#8fdc8f" strokeWidth="1.2" />
              <path d="M7 5H13V19H7V5M10 8H13M10 11H13M10 14H13" stroke="#dcc27a" strokeWidth="1.2" />
            </Icon>
            <Icon w={20} h={16} ml={13}>
              <path d="M0 3H8M4 -1V7" stroke="#8fdc8f" strokeWidth="1.2" />
              <path d="M1 8H20V14H1ZM6 8V11M10 8V11M14 8V11" stroke="#dcc27a" strokeWidth="1.2" />
            </Icon>
            <Icon w={15} ml={9}><path d="M0.5 0.5L14.5 14.5M14.5 0.5L0.5 14.5" stroke="#4a4a4a" /></Icon>
            <SToggle $ml={7}>
              <Icon w={19} h={14}>
                <path d="M1 12Q1 1 9.5 1Q18 1 18 12" stroke="#cfcfcf" strokeWidth="1.2" />
                <circle cx="9.5" cy="9.5" r="3.2" stroke="#cfcfcf" strokeWidth="1.2" />
              </Icon>
            </SToggle>
            <SToolSep $ml={4} $h={24} />
            <Icon w={8} h={8} ml={214}><path d="M0 1L3 4L0 7ZM5 1L8 4L5 7Z" fill="#bdbdbd" /></Icon>
          </SXamlTools>
          <SXamlBody>
            <SCanvas>
              <SPreviewClip>
                <SPreviewScale>
                  <CalcWindow value="" />
                </SPreviewScale>
              </SPreviewClip>
            </SCanvas>
            <SScrollCol $w={21}>
              <SCaret $up $c="#9a9a9a" />
              <SThumb $top={216} $h={351} $w={11} $c="#4d4d4d" />
              <SCaret $c="#9a9a9a" />
            </SScrollCol>
          </SXamlBody>
          <SXamlFoot>
            <SCombo $w={75} $ml={0} $bg="#2a2a2a" $pl={3} $h={21}>
              30%
              <SCaret $c="#cfcfcf" />
            </SCombo>
            <SHScroll>
              <Icon w={6} h={10}><path d="M6 0V10L0 5Z" fill="#8a8a8a" /></Icon>
              <SHThumb />
              <Icon w={6} h={10}><path d="M0 0V10L6 5Z" fill="#8a8a8a" /></Icon>
            </SHScroll>
            <SFootCorner />
          </SXamlFoot>
        </SXaml>
      </SMain>

      <SStatusBar>
        <Icon w={21} h={26}>
          <path d="M1 3H20V20H14L10.5 24L7 20H1Z" stroke="#e8e8e8" strokeWidth="1.2" />
        </Icon>
        <SStatusText $ml={10}>Ready</SStatusText>
        <SStatusRight>
          <Icon w={14} h={20}><path d="M7 20V1M1 7L7 1L13 7" stroke="#f0f0f0" strokeWidth="1.2" /></Icon>
          <SStatusText $ml={11}>Add to Source Control</SStatusText>
          <SCaret $up $c="#f0f0f0" $ml={9} />
          <Icon w={17} h={17} ml={28}>
            <path d="M0 1H17V5H0ZM2 5V16H15V5M6 5V11L8.5 9L11 11V5" stroke="#e8e8e8" strokeWidth="1.2" />
          </Icon>
          <SStatusText $ml={9}>Select Repository</SStatusText>
          <SCaret $up $c="#f0f0f0" $ml={10} />
          <SBellWrap>
            <Icon w={14} h={18}><path d="M1 14Q3 12 3 7Q3 2 7 2Q11 2 11 7Q11 12 13 14ZM5 16H9" stroke="#e8e8e8" strokeWidth="1.1" /></Icon>
            <SBellBadge>1</SBellBadge>
          </SBellWrap>
        </SStatusRight>
      </SStatusBar>

      <STaskbar>
        <SWeather>
          <Icon w={34} h={36}>
            <path d="M4 14Q5 7 11 3Q10 10 17 14L10 20Z" fill="#f5b13c" />
            <ellipse cx="17" cy="25" rx="15" ry="7.5" fill="#a8cdf0" />
            <ellipse cx="18" cy="20" rx="9.5" ry="8" fill="#c4e0f8" />
          </Icon>
          <SBadge $c="#c42b1c" $x={17} $y={-2}>1</SBadge>
        </SWeather>
        <STaskIcons>
          {TASK_ITEMS.map(t => (
            <STaskItem key={t.id} $bg={t.bg}>
              <svg width="30" height="30" viewBox="0 0 30 30" fill="none">{TaskLogos[t.id]}</svg>
              {t.dot && <STaskDot $c={t.dot[0]} $w={t.dot[1]} />}
              {t.badge && <SBadge $c={t.badge[1]}>{t.badge[0]}</SBadge>}
            </STaskItem>
          ))}
        </STaskIcons>
        <STray>
          <Icon w={14} h={8}><path d="M1 7L7 1L13 7" stroke="#1b1b1b" strokeWidth="1.5" /></Icon>
          <Icon w={20} h={18} ml={21}>
            <path d="M3 13Q0 8 5 5Q10 1 13 6Q16 7 15 11L9 15H5Z" fill="#6e6e6e" />
            <circle cx="14" cy="12" r="5.5" fill="#d13438" />
            <path d="M12 10L16 14M16 10L12 14" stroke="#fff" strokeWidth="1.2" />
          </Icon>
          <SLang>ENG<br />US</SLang>
          <Icon w={20} h={16} ml={18}>
            <path d="M1 5Q10 -3 19 5" stroke="#b0a8a0" strokeWidth="1.2" />
            <path d="M4 8.5Q10 3 16 8.5M7 11.5Q10 9 13 11.5" stroke="#1b1b1b" strokeWidth="1.2" />
            <circle cx="10" cy="14" r="1.5" fill="#1b1b1b" />
          </Icon>
          <Icon w={20} h={14} ml={10}>
            <path d="M1 4.5H4L9 1V13L4 9.5H1Z" stroke="#1b1b1b" />
            <path d="M13 5L19 10M19 5L13 10" stroke="#1b1b1b" />
          </Icon>
          <Icon w={20} h={16} ml={10}>
            <rect x="1" y="4" width="16" height="10" rx="2" fill="#1b1b1b" />
            <path d="M18.5 7V11" stroke="#1b1b1b" strokeWidth="1.4" />
            <path d="M8 0L5 6H8L7 10" stroke="#efe1d7" />
          </Icon>
          <SClock>11:51 PM<br />2024-03-03</SClock>
          <Icon w={16} h={20} ml={11}>
            <path d="M1 15Q3 13 3 8Q3 2 8 2Q13 2 13 8Q13 13 15 15ZM6 17.5Q8 19.5 10 17.5" stroke="#1b1b1b" strokeWidth="1.2" />
          </Icon>
          <Icon w={30} h={30} ml={21}>
            <defs>
              <linearGradient id="cp" x1="0" y1="0" x2="1" y2="1">
                <stop offset="0" stopColor="#2ea8e8" />
                <stop offset="0.5" stopColor="#7a6cf0" />
                <stop offset="1" stopColor="#e870c0" />
              </linearGradient>
            </defs>
            <path d="M2 16Q3 2 11 1H19Q28 3 28 14Q27 20 22 20H8Q3 20 2 16Z" fill="url(#cp)" />
            <path d="M8 9Q13 2 16 7L12 17H8Z" fill="#4fd08a" />
            <rect x="7" y="20" width="22" height="9" rx="2" fill="#ffc800" />
            <text x="18" y="27.5" textAnchor="middle" fontSize="7.5" fontWeight="700" fill="#222" fontFamily="Open Sans, sans-serif">PRE</text>
          </Icon>
        </STray>
      </STaskbar>

      <SFloating>
        <CalcWindow value="0" />
      </SFloating>
    </SLayout>
  );
}
